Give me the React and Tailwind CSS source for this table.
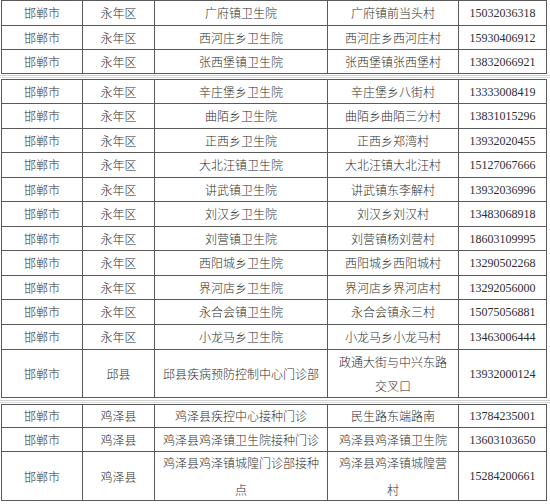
import React from "react";

const cjk = { fontFamily: '"Noto Sans CJK SC", "Noto Sans", sans-serif' };
const num = { fontFamily: '"Liberation Serif", "DejaVu Serif", serif' };

const t1 = [
  ["邯郸市", "永年区", "广府镇卫生院", "广府镇前当头村", "15032036318", "h-[25px]"],
  ["邯郸市", "永年区", "西河庄乡卫生院", "西河庄乡西河庄村", "15930406912", "h-[24px]"],
  ["邯郸市", "永年区", "张西堡镇卫生院", "张西堡镇张西堡村", "13832066921", "h-[24px]"],
];

const t2 = [
  ["邯郸市", "永年区", "辛庄堡乡卫生院", "辛庄堡乡八街村", "13333008419", "h-[24px]"],
  ["邯郸市", "永年区", "曲陌乡卫生院", "曲陌乡曲陌三分村", "13831015296", "h-[25px]"],
  ["邯郸市", "永年区", "正西乡卫生院", "正西乡郑湾村", "13932020455", "h-[24px]"],
  ["邯郸市", "永年区", "大北汪镇卫生院", "大北汪镇大北汪村", "15127067666", "h-[25px]"],
  ["邯郸市", "永年区", "讲武镇卫生院", "讲武镇东李解村", "13932036996", "h-[24px]"],
  ["邯郸市", "永年区", "刘汉乡卫生院", "刘汉乡刘汉村", "13483068918", "h-[25px]"],
  ["邯郸市", "永年区", "刘营镇卫生院", "刘营镇杨刘营村", "18603109995", "h-[24px]"],
  ["邯郸市", "永年区", "西阳城乡卫生院", "西阳城乡西阳城村", "13290502268", "h-[25px]"],
  ["邯郸市", "永年区", "界河店乡卫生院", "界河店乡界河店村", "13292056000", "h-[24px]"],
  ["邯郸市", "永年区", "永合会镇卫生院", "永合会镇永三村", "15075056881", "h-[25px]"],
  ["邯郸市", "永年区", "小龙马乡卫生院", "小龙马乡小龙马村", "13463006444", "h-[25px]"],
  ["邯郸市", "邱县", "邱县疾病预防控制中心门诊部", ["政通大街与中兴东路", "交叉口"], "13932000124", "h-[48px]", "leading-[24px]"],
];

const t3 = [
  ["邯郸市", "鸡泽县", "鸡泽县疾控中心接种门诊", "民生路东端路南", "13784235001", "h-[23px]"],
  ["邯郸市", "鸡泽县", "鸡泽县鸡泽镇卫生院接种门诊", "鸡泽县鸡泽镇卫生院", "13603103650", "h-[24px]"],
  ["邯郸市", "鸡泽县", ["鸡泽县鸡泽镇城隍门诊部接种", "点"], ["鸡泽县鸡泽镇城隍营", "村"], "15284200661", "h-[49px]", "leading-[27px]"],
];

const widths = ["w-[81px]", "w-[72px]", "w-[173px]", "w-[131px]", "w-[88px]"];

function Cell({ value, w, isNum, lh }) {
  const lines = Array.isArray(value) ? value : [value];
  return (
    <div
      className={`${w} shrink-0 border-r border-[#5a5a5a] flex flex-col items-center justify-center text-center text-[12px] text-[#2e2e2e] ${lh || "leading-[16px]"}`}
      style={isNum ? num : cjk}
    >
      {lines.map((l, i) => (
        <span key={i} className="whitespace-nowrap">{l}</span>
      ))}
    </div>
  );
}

function Table({ rows }) {
  return (
    <div className="ml-[1px] w-[546px] border-l border-t border-[#5a5a5a] flex flex-col">
      {rows.map((r, i) => (
        <div key={i} className={`flex border-b border-[#5a5a5a] box-border ${r[5]}`}>
          {r.slice(0, 5).map((v, j) => (
            <Cell key={j} value={v} w={widths[j]} isNum={j === 4} lh={r[6]} />
          ))}
        </div>
      ))}
    </div>
  );
}

function Gap() {
  return (
    <div className="h-[5px] flex flex-col justify-center gap-[1px]">
      <div className="h-[1px] w-[550px] bg-[#cfcfcf]" />
      <div className="h-[1px] w-[550px] bg-[#dadada]" />
    </div>
  );
}

export default function App() {
  return (
    <div className="w-[550px] h-[504px] bg-white overflow-hidden flex flex-col font-light">
      <Table rows={t1} />
      <Gap />
      <Table rows={t2} />
      <div className="h-[6px] flex flex-col justify-center gap-[1px]">
        <div className="h-[1px] w-[550px] bg-[#cfcfcf]" />
        <div className="h-[1px] w-[550px] bg-[#dadada]" />
      </div>
      <Table rows={t3} />
    </div>
  );
}
